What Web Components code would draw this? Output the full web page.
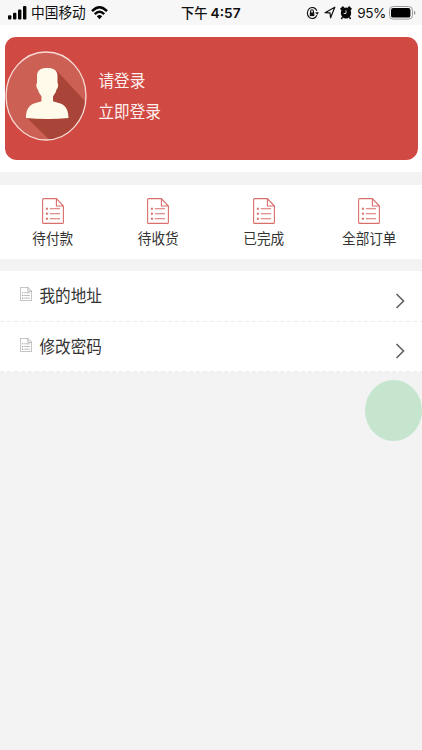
<!DOCTYPE html>
<html lang="zh-CN">
<head>
<meta charset="utf-8">
<title>我的</title>
<style>
html,body{margin:0;height:100%;background:#f3f3f3}
body{font-family:"Liberation Sans","Noto Sans CJK SC",sans-serif;color:#333;overflow:hidden}
</style>
</head>
<body>
<account-page></account-page>
<script>
const define = (name, html) => {
  const t = document.createElement('template');
  t.innerHTML = html;
  customElements.define(name, class extends HTMLElement {
    constructor() {
      super();
      this.attachShadow({mode: 'open'}).append(t.content.cloneNode(true));
    }
  });
};

define('doc-icon', `
<style>:host{display:block;color:#d96f6b}svg{display:block;width:100%;height:100%}</style>
<svg viewBox="0 0 22 26" preserveAspectRatio="none" fill="none" stroke="currentColor" stroke-width="1.1">
<path d="M.6 1.6Q.6.6 1.6.6H14.4L21.4 8V24.4Q21.4 25.4 20.4 25.4H1.6Q.6 25.4.6 24.4ZM14.4.6V8H21.4"/>
<path d="M7.8 10.8H18M7.8 15.8H18M7.8 20.7H18"/>
<path stroke-width="2" d="M3.9 10.8H5.9M3.9 15.8H5.9M3.9 20.7H5.9"/>
</svg>`);

define('status-bar', `
<style>
:host{display:flex;position:relative;height:25px;box-sizing:border-box;background:#f7f7f7;color:#111;align-items:center;justify-content:space-between;padding:0 6px 0 8px}
.g{display:flex;align-items:center}
svg{display:block;flex:none}
span{white-space:nowrap;line-height:20px;display:block}
.carrier{font-size:13.7px;margin:3px 5px 0 4px;transform:scaleY(1.07)}
.time{display:flex;align-items:baseline;gap:3px;margin:2px 0 0 4px;font-weight:500;font-size:13.3px}
.time b{font:600 13.7px Inter,sans-serif}
.pct{font:13.6px/20px Inter,sans-serif;letter-spacing:-.45px;margin:1px 3px 0 5px}
.mid{position:absolute;left:177px;top:2px}
</style>
<div class="g">
<svg width="19" height="14" viewBox="0 0 19 14" fill="#050505"><rect y="9.2" width="3.4" height="4.2" rx="1"/><rect x="5" y="6.8" width="3.4" height="6.6" rx="1"/><rect x="10" y="3.5" width="3.4" height="9.9" rx="1"/><rect x="15" y="0" width="3.4" height="13.4" rx="1"/></svg>
<span class="carrier">中国移动</span>
<svg width="17" height="14" viewBox="0 0 17 14" fill="none" stroke="#050505" stroke-width="2.4"><path d="M1 5.2Q8.5-2.6 16 5.2M3.8 8.2Q8.5 3.4 13.2 8.2"/><path d="M5.8 10.2Q8.5 7.7 11.2 10.2L8.5 13.2Z" fill="#050505" stroke="none"/></svg>
</div>
<div class="mid"><span class="time">下午<b>4:57</b></span></div>
<div class="g">
<svg width="13" height="14" viewBox="0 0 13 14" fill="none" stroke="#111" stroke-width="1.15"><path d="M10.9 9.3A5 5.5 0 1 1 10.9 4.700"/><path d="M9.2 6.300H12.800L11.2 9Z" fill="#111" stroke="none"/><path d="M4.600 7V5.200Q4.600 3.700 6 3.700T7.400 5.200V7"/><rect x="3.8" y="6.4" width="4.500" height="3.700" fill="#111" stroke="none"/></svg>
<svg style="margin-left:5px" width="12" height="13" viewBox="0 0 12 13" fill="none" stroke="#111" stroke-width="1.2" stroke-linejoin="round"><path d="M1 6.7 10.8 1.2 6.6 11.8 6 6.9Z"/></svg>
<svg style="margin-left:4px" width="12" height="14" viewBox="0 0 12 14"><path d="M.7 3.6 3.7.9M8.3.9 11.3 3.6" stroke="#080808" stroke-width="2.2"/><ellipse cx="6" cy="7" rx="5.200" ry="5.600" fill="#080808"/><path d="M2.5 11.2 1.4 13M9.5 11.2 10.6 13" stroke="#080808" stroke-width="1.5"/><path d="M6 4.3V7.5H3.7" fill="none" stroke="#eee" stroke-width=".9"/></svg>
<span class="pct">95%</span>
<svg width="27" height="14" viewBox="0 0 27 14"><rect x=".5" y=".5" width="23" height="12.6" rx="3.8" fill="none" stroke="#999"/><rect x="2" y="2" width="19.4" height="9.6" rx="2.2"/><path d="M25 4.7Q26.5 5.3 26.5 6.9T25 9Z" fill="#999"/></svg>
</div>`);

define('user-avatar', `
<style>:host{display:block;width:82px;height:90px;flex:none}svg{display:block;width:100%;height:100%}</style>
<svg viewBox="0 0 82 90">
<defs><clipPath id="c"><ellipse cx="41" cy="45" rx="40" ry="44"/></clipPath></defs>
<g clip-path="url(#c)"><path fill="#cc6054" d="M0 0H82V90H0Z"/>
<path fill="#a84438" d="M51 19 90 61V100H56L22 67L40 60Z"/></g>
<path fill="#fffae9" d="M42 17C49 17 52.500 19.500 52.500 25V32C53.800 33 53 37.500 51.500 38.500C51 42 49 43.500 48 45.500V50C50.500 52.500 63.500 50 63.500 67Q42.500 69 21 67C21 50 34 52.500 36.500 50V45.500C35.500 43.500 33.500 42 33 38.500C31.300 37.500 30.800 33 32 32V25C32 19.500 35.500 17 42 17Z"/>
<ellipse cx="41" cy="45" rx="40" ry="44" fill="none" stroke="#f9dcd6" stroke-width="1.3"/>
</svg>`);

define('login-card', `
<style>
:host{display:flex;box-sizing:border-box;height:123px;border-radius:11px 11px 12px 12px;background:#d14943;color:#fdf0ee;padding-top:14px}
.t{margin:14.5px 0 0 11.5px;font-size:15.6px;line-height:31px}
.t div{transform:scaleY(1.08)}
</style>
<user-avatar></user-avatar><div class="t"><div><slot name="title"></slot></div><div><slot name="action"></slot></div></div>`);

define('order-tab', `
<style>
:host{display:flex;flex-direction:column;align-items:center;box-sizing:border-box;padding-top:13px;font-size:13.6px;line-height:20px}
doc-icon{width:22px;height:26px}
span{margin-top:6px;transform:scaleY(1.08)}
</style><doc-icon></doc-icon><span><slot></slot></span>`);

define('menu-row', `
<style>
:host{display:flex;box-sizing:border-box;height:50.5px;align-items:center;background:#fff;padding:0 17px 0 20px}
doc-icon{width:12px;height:14px;color:#888;margin-top:-4px}
span{margin:2px auto 0 7.5px;font-size:15.6px;line-height:24px;transform:scaleY(1.08)}
svg{margin-top:9px}
</style><doc-icon></doc-icon><span><slot></slot></span>
<svg width="10" height="16" viewBox="0 0 10 16" fill="none" stroke="#606060" stroke-width="1.6"><path d="M1.500 1 8.500 8 1.500 15"/></svg>`);

define('account-page', `
<style>
:host{display:block;width:422px;height:750px;background:#f3f3f3}
.top{background:#fff;padding:12px 4px 12px 5px}
.orders{display:grid;grid-template-columns:repeat(4,1fr);height:74px;margin:13px 0 12px;background:#fff}
.line{height:1px;margin-top:-1px;position:relative;background:repeating-linear-gradient(90deg,#ebebeb 0 4px,#fff 4px 7px)}
.float{position:absolute;left:365px;top:380px;width:57px;height:61px;border-radius:50%;background:#c5e5cf}
</style>
<status-bar></status-bar>
<div class="top"><login-card><span slot="title">请登录</span><span slot="action">立即登录</span></login-card></div>
<div class="orders"><order-tab>待付款</order-tab><order-tab>待收货</order-tab><order-tab>已完成</order-tab><order-tab>全部订单</order-tab></div>
<menu-row>我的地址</menu-row><div class="line"></div>
<menu-row>修改密码</menu-row><div class="line"></div>
<div class="float"></div>`);
</script>
</body>
</html>
